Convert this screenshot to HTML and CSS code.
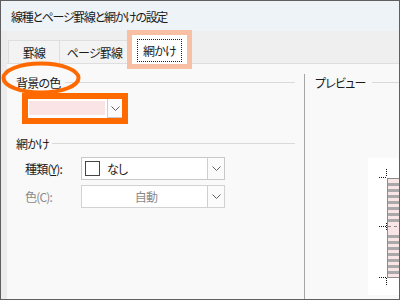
FILE: index.html
```html
<!DOCTYPE html>
<html lang="ja">
<head>
    <meta charset="UTF-8">
    <title>線種とページ罫線と網かけの設定</title>
    <link rel="stylesheet" href="styles.css">
</head>
<body>
    <div class="window">
        <div class="titlebar">線種とページ罫線と網かけの設定</div>
        <div class="frame">
            <div class="strip"></div>
            <div class="panel">
                <div class="tabs">
                    <div class="tab tab-first">罫線</div>
                    <div class="tab">ページ罫線</div>
                    <div class="tab tab-active"><span class="focus">網かけ</span></div>
                </div>
                <div class="content">
                    <div class="left-col">
                        <div class="group-head head-fill">
                            <span class="group-title">背景の色</span>
                            <span class="group-line"></span>
                            <svg class="ellipse-mark" width="80" height="34" viewBox="0 0 80 34">
                                <ellipse cx="40" cy="17" rx="37.5" ry="14.5" fill="none" stroke="#ff6a00" stroke-width="4"/>
                            </svg>
                        </div>
                        <div class="mark-box">
                            <div class="combo-color">
                                <div class="swatch"></div>
                                <div class="combo-btn">
                                    <svg width="9" height="5" viewBox="0 0 9 5"><path d="M0.5 0.5 L4.5 4.5 L8.5 0.5" fill="none" stroke="#606060"/></svg>
                                </div>
                            </div>
                        </div>
                        <div class="group-head head-shade">
                            <span class="group-title">網かけ</span>
                            <span class="group-line"></span>
                        </div>
                        <div class="field-row">
                            <label class="field-label">種類(<u>Y</u>):</label>
                            <div class="combo">
                                <div class="combo-value">
                                    <span class="check-box"></span>
                                    <span>なし</span>
                                </div>
                                <div class="combo-btn">
                                    <svg width="9" height="5" viewBox="0 0 9 5"><path d="M0.5 0.5 L4.5 4.5 L8.5 0.5" fill="none" stroke="#606060"/></svg>
                                </div>
                            </div>
                        </div>
                        <div class="field-row disabled">
                            <label class="field-label">色(C):</label>
                            <div class="combo">
                                <div class="combo-value centered">自動</div>
                                <div class="combo-btn">
                                    <svg width="9" height="5" viewBox="0 0 9 5"><path d="M0.5 0.5 L4.5 4.5 L8.5 0.5" fill="none" stroke="#606060"/></svg>
                                </div>
                            </div>
                        </div>
                    </div>
                    <div class="preview-col">
                        <div class="group-head head-preview">
                            <span class="group-title">プレビュー</span>
                            <span class="group-line"></span>
                        </div>
                        <div class="preview-box">
                            <svg width="40" height="137" viewBox="0 0 40 137">
                                <rect x="19.5" y="20.5" width="30" height="99" fill="#f9e4e6" stroke="#8c8c8c"/>
                                <g fill="#a9a9a9">
                                    <rect x="20" y="25" width="20" height="3"/>
                                    <rect x="20" y="31" width="20" height="3"/>
                                    <rect x="20" y="37" width="20" height="3"/>
                                    <rect x="20" y="43" width="20" height="3"/>
                                    <rect x="20" y="49" width="20" height="3"/>
                                    <rect x="20" y="55" width="20" height="3"/>
                                    <rect x="20" y="61" width="20" height="3"/>
                                    <rect x="20" y="77" width="20" height="3"/>
                                    <rect x="20" y="83" width="20" height="3"/>
                                    <rect x="20" y="89" width="20" height="3"/>
                                    <rect x="20" y="95" width="20" height="3"/>
                                    <rect x="20" y="101" width="20" height="3"/>
                                    <rect x="20" y="107" width="20" height="3"/>
                                    <rect x="20" y="113" width="20" height="3"/>
                                </g>
                                <line x1="20" y1="68.5" x2="40" y2="68.5" stroke="#8c8c8c" stroke-dasharray="3 3"/>
                                <g stroke="#111" stroke-dasharray="1 1" fill="none">
                                    <path d="M11 19.5 H19 M18.5 11 V19"/>
                                    <path d="M11 68.5 H19 M18.5 65 V72"/>
                                    <path d="M11 119.5 H19 M18.5 120 V128"/>
                                </g>
                            </svg>
                        </div>
                    </div>
                </div>
            </div>
        </div>
    </div>
</body>
</html>
```

FILE: styles.css
```css
* {
    margin: 0;
    padding: 0;
    box-sizing: border-box;
}

body {
    background: #ffffff;
    font-family: "Noto Sans CJK JP", "Noto Sans", sans-serif;
    font-size: 12px;
    font-feature-settings: "palt";
    letter-spacing: -0.8px;
    color: #1a1a1a;
}

.window {
    width: 400px;
    height: 300px;
    border: 1px solid #5f5f5f;
    display: flex;
    flex-direction: column;
    overflow: hidden;
}

.titlebar {
    height: 30px;
    background: #eef3f8;
    padding-left: 10px;
    display: flex;
    align-items: center;
    letter-spacing: -1.3px;
}

.frame {
    flex: 1;
    display: flex;
}

.strip {
    flex-shrink: 0;
    width: 6px;
    background: #ececec;
}

.panel {
    flex: 1;
    min-width: 0;
    display: flex;
    flex-direction: column;
    background: #f9f9f9;
}

/* tabs */
.tabs {
    height: 33px;
    background: #efefef;
    border-bottom: 1px solid #dedede;
    display: flex;
    align-items: flex-end;
    padding-left: 1px;
}

.tab {
    flex-shrink: 0;
    height: 23px;
    width: 70px;
    background: #f3f3f3;
    border: 1px solid #dedede;
    border-bottom: none;
    border-left: none;
    display: flex;
    align-items: center;
    justify-content: center;
}

.tab-first {
    width: 52px;
    border-left: 1px solid #dedede;
}

.tab-active {
    position: relative;
    width: 55px;
    height: 29px;
    margin-left: 2px;
    margin-bottom: -1px;
    background: #ffffff;
    border: none;
    align-items: flex-start;
}

.tab-active::after {
    content: "";
    position: absolute;
    inset: -5px;
    border: 5px solid #f7c0a4;
}

.focus {
    display: block;
    width: 45px;
    height: 23px;
    margin-top: 4px;
    line-height: 21px;
    text-align: center;
    border: 1px dotted #222;
}

/* content */
.content {
    flex: 1;
    display: flex;
    padding: 10px 0 0 9px;
}

.left-col {
    flex-shrink: 0;
    width: 279px;
    display: flex;
    flex-direction: column;
    align-items: flex-start;
}

.group-head {
    position: relative;
    align-self: stretch;
    height: 16px;
    display: flex;
    align-items: center;
}

.group-title {
    padding-right: 5px;
}

.group-line {
    flex: 1;
    height: 1px;
    background: #dadada;
}

.ellipse-mark {
    position: absolute;
    left: -15px;
    top: -13px;
}

.mark-box {
    margin: 3px 0 0 6px;
    border: 6px solid #ff6a00;
}

.combo-color {
    width: 94px;
    height: 19px;
    background: #ffffff;
    display: flex;
}

.swatch {
    flex: 1;
    margin: 2px 2px 3px 1px;
    background: #fae4e6;
}

.combo-color .combo-btn {
    width: 15px;
    border-bottom: 1px solid #c9c9c9;
}

.head-shade {
    margin-top: 11px;
}

.head-shade .group-title {
    padding-right: 3px;
}

.field-row {
    display: flex;
    align-items: center;
    margin-top: 6px;
}

.field-row + .field-row {
    margin-top: 5px;
}

.field-label {
    width: 65px;
    padding-left: 9px;
}

.combo {
    width: 144px;
    height: 23px;
    background: #ffffff;
    border: 1px solid #c8c8c8;
    display: flex;
}

.combo-value {
    flex: 1;
    display: flex;
    align-items: center;
    gap: 7px;
    padding-left: 3px;
}

.combo-value.centered {
    justify-content: center;
}

.check-box {
    width: 15px;
    height: 15px;
    border: 1px solid #444;
    background: #ffffff;
}

.combo-btn {
    width: 17px;
    border-left: 1px solid #cfcfcf;
    background: #fbfbfb;
    display: flex;
    align-items: center;
    justify-content: center;
}

.disabled .field-label,
.disabled .combo-value {
    color: #8a8a8a;
}

.disabled .combo {
    border-color: #d2d2d2;
}

/* preview */
.preview-col {
    flex: 1;
    min-width: 0;
    margin-left: 9px;
    border-left: 1px solid #a6a6a6;
    display: flex;
    flex-direction: column;
}

.head-preview {
    padding-left: 10px;
}

.head-preview .group-title {
    padding-right: 6px;
}

.preview-box {
    margin: 68px 0 0 63px;
    height: 137px;
    background: #ffffff;
    overflow: hidden;
}
```
